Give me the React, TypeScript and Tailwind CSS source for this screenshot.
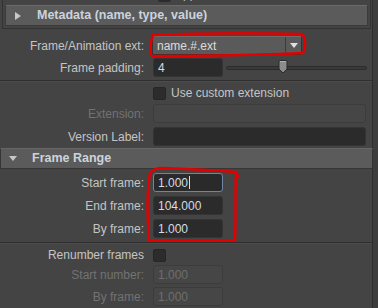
import type { ReactNode } from "react";

const font = { fontFamily: '"Liberation Sans", Arial, sans-serif' };

function Label({ children, disabled }: { children: ReactNode; disabled?: boolean }) {
  return (
    <div
      className={`w-[145px] shrink-0 pr-[1px] text-right text-[12px] leading-none ${
        disabled ? "text-[#727272]" : "text-[#c4c4c4]"
      }`}
    >
      {children}
    </div>
  );
}

function Field({
  value,
  wide,
  focused,
  disabled,
}: {
  value?: string;
  wide?: boolean;
  focused?: boolean;
  disabled?: boolean;
}) {
  const base = wide ? "w-[213px]" : "w-[70px]";
  const tone = disabled
    ? "bg-[#464646] border-[#3c3c3c] text-[#6e6e6e]"
    : focused
      ? "bg-[#2a2a2a] border-[#6c86a3] text-[#d4dce6]"
      : "bg-[#2b2b2b] border-[#343434] text-[#d4dce6]";
  return (
    <div
      className={`${base} ${tone} ml-[8px] flex h-[19px] items-center rounded-[3px] border px-[4px] text-[12px] leading-none`}
    >
      {value}
      {focused ? <span className="ml-[1px] h-[13px] w-[1px] bg-[#d4dce6]" /> : null}
    </div>
  );
}

function Checkbox() {
  return <div className="ml-[8px] h-[13px] w-[13px] rounded-[2px] border border-[#262626] bg-[#2c2c2c]" />;
}

function Row({ children }: { children: ReactNode }) {
  return <div className="flex h-[19px] items-center">{children}</div>;
}

function Divider() {
  return <div className="h-[2px] border-t border-b border-[#2f2f2f] border-b-[#4c4c4c]" />;
}

export default function App() {
  return (
    <div className="relative h-[308px] w-[378px] overflow-hidden bg-[#3d3d3d]" style={font}>
      <div className="h-[308px] w-[373px] border-r border-[#2e2e2e] bg-[#444444]">
        {/* metadata frame */}
        <div className="relative mx-[2px] h-[29px] w-[369px] border-x border-b border-[#333333] pt-[5px]">
          <div className="absolute left-[155px] top-[-11px] h-[13px] w-[13px] rounded-[2px] bg-[#2c2c2c]" />
          <span className="absolute left-[172px] top-[-13px] text-[12px] leading-[14px] text-[#c4c4c4]">Append</span>
          <div className="mx-[2px] flex h-[21px] items-center rounded-[2px] border border-[#3a3a3a] border-t-[#6a6a6a] bg-[#5b5b5b]">
            <svg width="6" height="8" viewBox="0 0 6 8" className="ml-[9px]">
              <path d="M0 0 L6 4 L0 8 Z" fill="#c8c8c8" />
            </svg>
            <span className="ml-[16px] text-[12.5px] font-bold text-[#cbd3dd]">Metadata (name, type, value)</span>
          </div>
        </div>

        <div className="flex flex-col gap-[3px] pt-[7px]">
          <Row>
            <Label>Frame/Animation ext:</Label>
            <div className="ml-[7px] flex h-[19px] w-[150px] items-center rounded-[2px] border border-[#333333] border-t-[#6b6b6b] bg-[#5a5a5a] text-[12px] text-[#dcdcdc]">
              <span className="flex-1 pl-[4px]">name.#.ext</span>
              <div className="flex h-full w-[16px] items-center justify-center border-l border-[#3d3d3d]">
                <svg width="8" height="5" viewBox="0 0 8 5">
                  <path d="M0 0 H8 L4 5 Z" fill="#e0e0e0" />
                </svg>
              </div>
            </div>
          </Row>
          <Row>
            <Label>Frame padding:</Label>
            <Field value="4" />
            <div className="relative ml-[3px] flex h-[19px] w-[141px] items-center">
              <div className="h-[4px] w-full rounded-full border border-[#2c2c2c] bg-[#3a3a3a]" />
              <svg width="10" height="14" viewBox="0 0 10 14" className="absolute left-[52px] top-[2px]">
                <path d="M1 1.5 Q1 0.5 2 0.5 H8 Q9 0.5 9 1.5 V9 L5 13 L1 9 Z" fill="#8c8c8c" stroke="#2a2a2a" />
                <path d="M2 1.5 H8" stroke="#b0b0b0" />
              </svg>
            </div>
          </Row>
        </div>

        <div className="mt-[3px]">
          <Divider />
        </div>

        <div className="flex flex-col gap-[4px] pt-[4px]">
          <div className="flex h-[14px] items-center">
            <div className="w-[145px]" />
            <Checkbox />
            <span className="ml-[5px] text-[12px] text-[#c4c4c4]">Use custom extension</span>
          </div>
          <Row>
            <Label disabled>Extension:</Label>
            <Field wide disabled />
          </Row>
          <Row>
            <Label>Version Label:</Label>
            <Field wide />
          </Row>
        </div>

        {/* frame range header */}
        <div className="mt-[2px] flex h-[21px] w-[373px] items-center border border-[#363636] border-t-[#666666] bg-[#5b5b5b]">
          <svg width="8" height="5" viewBox="0 0 8 5" className="ml-[8px]">
            <path d="M0 0 H8 L4 5 Z" fill="#c8c8c8" />
          </svg>
          <span className="ml-[15px] text-[12.5px] font-bold text-[#cbd3dd]">Frame Range</span>
        </div>

        <div className="flex flex-col gap-[4px] pt-[4px]">
          <Row>
            <Label>Start frame:</Label>
            <Field value="1.000" focused />
          </Row>
          <Row>
            <Label>End frame:</Label>
            <Field value="104.000" />
          </Row>
          <Row>
            <Label>By frame:</Label>
            <Field value="1.000" />
          </Row>
        </div>

        <div className="mt-[4px]">
          <Divider />
        </div>

        <div className="flex flex-col gap-[3px] pt-[4px]">
          <div className="flex h-[14px] items-center">
            <Label>Renumber frames</Label>
            <Checkbox />
          </div>
          <Row>
            <Label disabled>Start number:</Label>
            <Field value="1.000" disabled />
          </Row>
          <Row>
            <Label disabled>By frame:</Label>
            <Field value="1.000" disabled />
          </Row>
        </div>
        <div className="mt-[2px] border-t border-[#2f2f2f]" />
      </div>

      {/* red annotations */}
      <svg width="378" height="308" className="pointer-events-none absolute left-0 top-0">
        <path
          d="M151 55 C150 48 151 40 153 35 C200 33 260 33 302 34 C306 38 306 48 303 53 C260 55 200 56 152 56"
          fill="none"
          stroke="#e30000"
          strokeWidth="2.5"
          strokeLinecap="round"
        />
        <path
          d="M149 240 C147 215 147 190 150 173 C153 169 157 168 162 168 C190 169 215 170 236 172 L238 176 M236 172 C235 195 236 220 235 240 C210 241 175 241 149 240"
          fill="none"
          stroke="#e30000"
          strokeWidth="2.5"
          strokeLinecap="round"
        />
      </svg>
    </div>
  );
}
